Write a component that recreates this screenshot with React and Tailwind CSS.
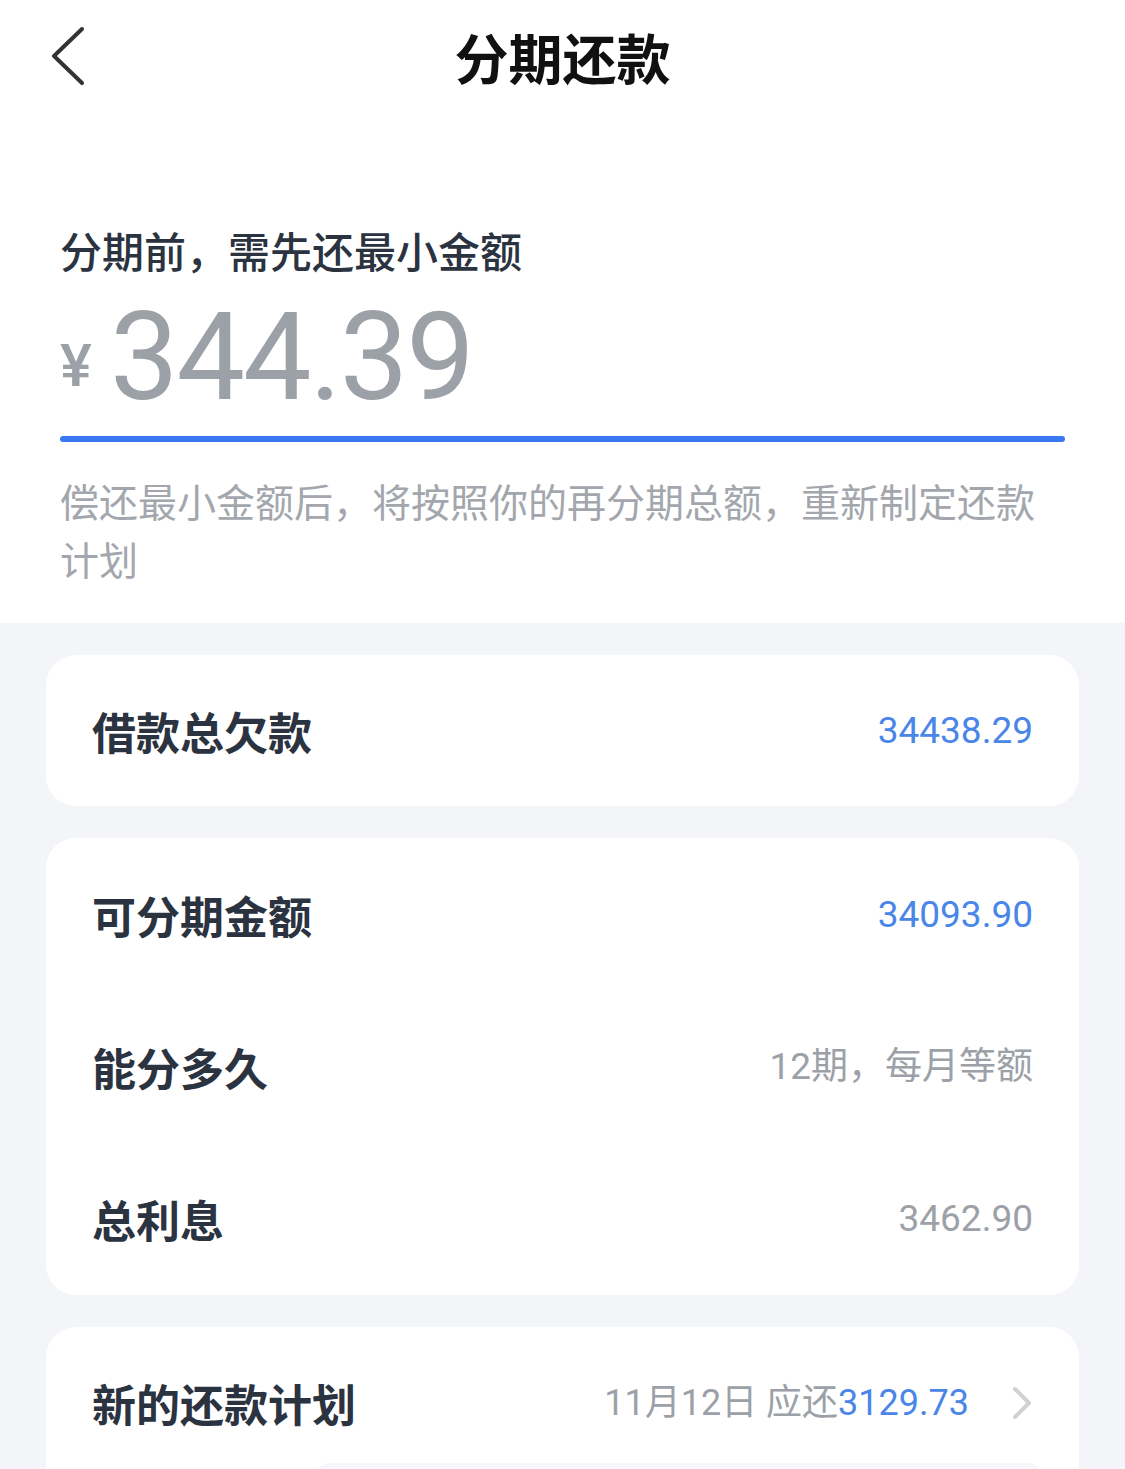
export default function App() {
  const cjk = { fontFamily: '"Noto Sans CJK SC", "Noto Sans", sans-serif' };
  const num = { fontFamily: 'Roboto, "Noto Sans CJK SC", sans-serif' };
  return (
    <div className="w-[1125px] h-[1469px] overflow-hidden bg-[#f4f5f9]" style={cjk}>
      <div className="bg-white">
        <div className="relative h-[114px] flex items-center justify-center">
          <svg className="absolute left-[48px] top-[26px]" width="40" height="60" viewBox="0 0 40 60" fill="none">
            <path d="M34 3 L6 30 L34 57" stroke="#333" strokeWidth="4" strokeLinecap="round" strokeLinejoin="round" />
          </svg>
          <div className="text-[54px] font-bold text-[#111] leading-none">分期还款</div>
        </div>
        <div className="px-[60px] pt-[108px] pb-[36px]">
          <div className="text-[42px] leading-[56px] font-medium text-[#2c3340]">分期前，需先还最小金额</div>
          <div className="flex items-end mt-[20px]" style={num}>
            <span className="text-[60px] leading-[60px] text-[#9ca1a8] font-medium mb-[22px]">¥</span>
            <span className="text-[122px] leading-[120px] text-[#9ca1a8] font-normal ml-[18px] tracking-[-2px]">344.39</span>
          </div>
          <div className="mt-[18px] h-[6px] rounded-full bg-[#3a78f2]" />
          <div className="mt-[29px] text-[39px] leading-[58px] text-[#a3a7ad]">
            偿还最小金额后，将按照你的再分期总额，重新制定还款计划
          </div>
        </div>
      </div>
      <div className="px-[46px] pt-[32px] flex flex-col gap-[32px]">
        <div className="h-[151px] rounded-[30px] bg-white px-[46px] flex items-center justify-between">
          <span className="text-[44px] font-bold text-[#2b3341]">借款总欠款</span>
          <span className="text-[37px] text-[#4a86e8]" style={num}>34438.29</span>
        </div>
        <div className="h-[457px] rounded-[30px] bg-white px-[46px] flex flex-col justify-center">
          <div className="h-[152px] flex items-center justify-between">
            <span className="text-[44px] font-bold text-[#2b3341]">可分期金额</span>
            <span className="text-[37px] text-[#4a86e8]" style={num}>34093.90</span>
          </div>
          <div className="h-[152px] flex items-center justify-between">
            <span className="text-[44px] font-bold text-[#2b3341]">能分多久</span>
            <span className="text-[37px] text-[#9ca1a8]" style={num}>12期，每月等额</span>
          </div>
          <div className="h-[152px] flex items-center justify-between">
            <span className="text-[44px] font-bold text-[#2b3341]">总利息</span>
            <span className="text-[37px] text-[#9ca1a8]" style={num}>3462.90</span>
          </div>
        </div>
        <div className="rounded-t-[30px] bg-white">
          <div className="h-[152px] px-[46px] flex items-center justify-between">
            <span className="text-[44px] font-bold text-[#2b3341]">新的还款计划</span>
            <div className="flex items-center">
              <span className="text-[36px] text-[#9ca1a8]" style={num}>
                11月12日 应还<span className="text-[#4a86e8]">3129.73</span>
              </span>
              <svg className="ml-[42px]" width="22" height="34" viewBox="0 0 22 34" fill="none">
                <path d="M4 3 L18 17 L4 31" stroke="#cfd1d4" strokeWidth="4" strokeLinecap="round" strokeLinejoin="round" />
              </svg>
            </div>
          </div>
          <div className="-mt-[16px] ml-[271px] mr-[39px] h-[20px] rounded-t-[12px] bg-[#f5f7fb]" />
        </div>
      </div>
    </div>
  );
}
